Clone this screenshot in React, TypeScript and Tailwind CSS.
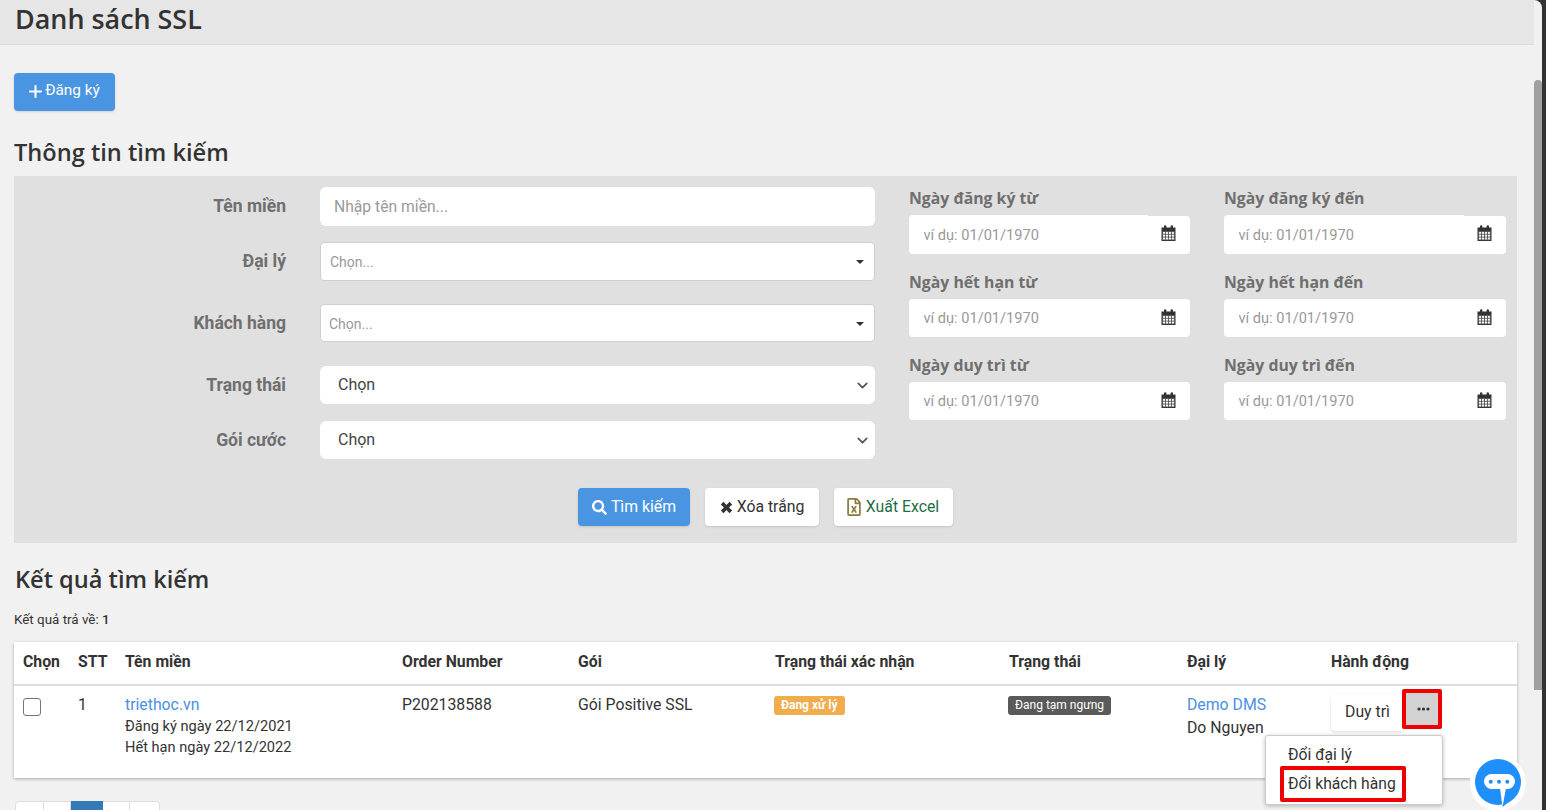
import { ChevronDown, Plus } from "lucide-react";
import { FaRegFileExcel, FaSearch } from "react-icons/fa";

const roboto = "font-['Roboto',sans-serif]";
const openSans = "font-['Open_Sans',sans-serif]";

const CalendarIcon = () => (
  <svg width="15" height="16" viewBox="0 0 15 16" className="text-[#333]">
    <path d="M0.5 2.5H3V1.5a1.2 1.2 0 0 1 2.4 0v1h4.2v-1a1.2 1.2 0 0 1 2.4 0v1h2.5V16H.5z" fill="currentColor" />
    <path
      d="M1.6 6.6h11.8v8.3H1.6zM4.5 6.6v8.3M7.5 6.6v8.3M10.5 6.6v8.3M1.6 9.3h11.8M1.6 12.1h11.8"
      fill="#fff"
      stroke="#444"
      strokeWidth=".8"
    />
  </svg>
);

const Caret = () => (
  <svg width="8" height="4" viewBox="0 0 8 4" className="text-[#333]">
    <path d="M0 0h8L4 4z" fill="currentColor" />
  </svg>
);

const TimesIcon = () => (
  <svg width="13" height="13" viewBox="0 0 12 12" className="text-[#333]">
    <path d="M.8 3.2 3.2.8 6 3.6 8.8.8l2.4 2.4L8.4 6l2.8 2.8-2.4 2.4L6 8.4l-2.8 2.8L.8 8.8 3.6 6z" fill="currentColor" />
  </svg>
);

const ChatBubble = () => (
  <svg width="56" height="56" viewBox="0 0 56 56">
    <circle cx="28" cy="28" r="28" fill="#fff" />
    <circle cx="28" cy="27" r="23" fill="#1f8ffb" />
    <path d="M32.5 52 45 42 30 40z" fill="#1f8ffb" />
    <rect x="14" y="19" width="31" height="15" rx="7.5" fill="#fff" />
    <path d="M30 33h6l-3.5 19z" fill="#fff" />
    <circle cx="20.7" cy="26.7" r="2" fill="#1f8ffb" />
    <circle cx="29" cy="26.7" r="2" fill="#1f8ffb" />
    <circle cx="37.3" cy="26.7" r="2" fill="#1f8ffb" />
  </svg>
);

const FormRow = ({ label, mt, children }: { label: string; mt: string; children: React.ReactNode }) => (
  <div className={`flex items-center ${mt}`}>
    <label className={`w-[272px] text-right text-[17.5px] font-bold text-[#6f6f6f] ${roboto}`}>{label}</label>
    <div className="ml-[34px] w-[555px]">{children}</div>
  </div>
);

const ComboBox = ({ h, pl }: { h: string; pl: string }) => (
  <div className={`flex ${h} items-center justify-between rounded border border-[#cfcfcf] bg-white pt-px ${pl} pr-[10px]`}>
    <span className="text-sm text-[#999]">Chọn...</span>
    <Caret />
  </div>
);

const SelectBox = () => (
  <div className="flex h-[38px] items-center justify-between rounded-md bg-white pl-[18px] pr-[4px]">
    <span className="text-base text-[#444]">Chọn</span>
    <ChevronDown size={17} strokeWidth={2.4} className="text-[#555]" />
  </div>
);

const DateField = ({ label, first }: { label: string; first?: boolean }) => (
  <div>
    <div className={`flex h-[28px] items-start text-[15.8px] font-bold leading-[22px] text-[#6f6f6f] ${openSans}`}>{label}</div>
    <div className="flex items-start">
      <input
        placeholder="ví dụ: 01/01/1970"
        className={`${first ? "h-[39px]" : "h-[38px]"} min-w-0 flex-1 rounded-l bg-white pl-[14.5px] text-[14.6px] outline-none placeholder:text-[#999]`}
      />
      <div className={`flex h-[38px] w-[42px] items-center justify-center rounded-r bg-white pr-px ${first ? "mt-px pb-[5px]" : "pb-[3px]"}`}>
        <CalendarIcon />
      </div>
    </div>
  </div>
);

const ActionButton = ({ className, children }: { className: string; children: React.ReactNode }) => (
  <button className={`flex h-[38px] items-center justify-center rounded shadow-sm ${className}`}>{children}</button>
);

const columns = [
  ["Chọn", "w-[55px]"],
  ["STT", "w-[47px]"],
  ["Tên miền", "w-[277px]"],
  ["Order Number", "w-[176px]"],
  ["Gói", "w-[197px]"],
  ["Trạng thái xác nhận", "w-[234px]"],
  ["Trạng thái", "w-[178px]"],
  ["Đại lý", "w-[144px]"],
  ["Hành động", "w-[195px]"],
];

export default function App() {
  return (
    <div className={`flex h-[810px] overflow-hidden bg-[#333] ${roboto}`}>
      <main className="w-[1534px] shrink-0 bg-[#f1f1f1] text-[#333]">
        <header className={`flex h-[45px] items-start border-b border-[#dcdcdc] bg-[#e6e6e6] pl-[15px] text-[26.9px] font-semibold leading-[37px] ${openSans}`}>
          Danh sách SSL
        </header>

        <div className="pl-[14px] pr-[17px] pt-[28px]">
          <ActionButton className="w-[101px] gap-[2px] bg-[#4a95e2] pb-[2px] pr-px text-[15.4px] text-white">
            <Plus size={19} strokeWidth={2.6} className="-ml-[2px] -mr-[2px]" />
            Đăng ký
          </ActionButton>

          <h2 className={`mt-[23px] h-[42px] text-[23.6px] font-semibold leading-[36px] ${openSans}`}>Thông tin tìm kiếm</h2>

          <section className="h-[367px] bg-[#e0e0e0] pt-[11px]">
            <div className="flex">
              <div className="w-[895px]">
                <FormRow label="Tên miền" mt="">
                  <input
                    placeholder="Nhập tên miền..."
                    className="h-[39px] w-full rounded-md bg-white pl-[14px] text-[15.7px] outline-none placeholder:text-[#999]"
                  />
                </FormRow>
                <FormRow label="Đại lý" mt="mt-[16px]">
                  <ComboBox h="h-[39px]" pl="pl-[9px]" />
                </FormRow>
                <FormRow label="Khách hàng" mt="mt-[23px]">
                  <ComboBox h="h-[38px]" pl="pl-[8px]" />
                </FormRow>
                <FormRow label="Trạng thái" mt="mt-[24px]">
                  <SelectBox />
                </FormRow>
                <FormRow label="Gói cước" mt="mt-[17px]">
                  <SelectBox />
                </FormRow>
              </div>
              <div className="grid w-[597px] grid-cols-[281px_282px] content-start gap-x-[34px] gap-y-[17px]">
                <DateField label="Ngày đăng ký từ" first />
                <DateField label="Ngày đăng ký đến" first />
                <DateField label="Ngày hết hạn từ" />
                <DateField label="Ngày hết hạn đến" />
                <DateField label="Ngày duy trì từ" />
                <DateField label="Ngày duy trì đến" />
              </div>
            </div>

            <div className="mt-[29px] flex justify-center gap-[15px]">
              <ActionButton className="w-[112px] gap-[4px] bg-[#4a95e2] text-[15.8px] text-white">
                <FaSearch size={15} />
                Tìm kiếm
              </ActionButton>
              <ActionButton className="w-[114px] gap-[4px] bg-white text-[15.8px] text-[#333]">
                <TimesIcon />
                Xóa trắng
              </ActionButton>
              <ActionButton className="w-[119px] gap-[3px] bg-white pr-[3px] text-[15.8px] text-[#1d6f42]">
                <FaRegFileExcel size={18} className="text-[#8a7a3a]" />
                Xuất Excel
              </ActionButton>
            </div>
          </section>

          <h2 className={`mt-[20px] h-[42px] pl-px text-[23.6px] font-semibold leading-[32px] ${openSans}`}>Kết quả tìm kiếm</h2>
          <p className="mt-[6px] h-[31px] text-[13.4px] leading-[18px]">
            Kết quả trả về: <b className="font-medium">1</b>
          </p>

          <div className="relative bg-white shadow-[0_1px_3px_rgba(0,0,0,0.3)]">
            <table className="w-[1503px] table-fixed text-left text-[15.8px]">
              <thead>
                <tr className="h-[43px] border-b-2 border-[#ddd]">
                  {columns.map(([name, width]) => (
                    <th key={name} className={`${width} pb-[2px] pl-[9px] font-bold`}>
                      {name}
                    </th>
                  ))}
                </tr>
              </thead>
              <tbody>
                <tr className="h-[93px] align-top">
                  <td className="pl-[9px] pt-[12px]">
                    <span className="block h-[18px] w-[18px] rounded-[3px] border border-[#767676] bg-white" />
                  </td>
                  <td className="pl-[9px] pt-[7px]">1</td>
                  <td className="pl-[9px] pt-[8px] text-[14.6px] leading-[21px]">
                    <a className="text-[15.8px] text-[#4a90e2]">triethoc.vn</a>
                    <div>Đăng ký ngày 22/12/2021</div>
                    <div>Hết hạn ngày 22/12/2022</div>
                  </td>
                  <td className="pl-[9px] pt-[7px]">P202138588</td>
                  <td className="pl-[9px] pt-[7px]">Gói Positive SSL</td>
                  <td className="pl-[8px] pt-[6px]">
                    <span className="inline-block rounded-[3px] bg-[#f0ad4e] px-[7px] text-xs font-bold leading-[19px] text-white">Đang xử lý</span>
                  </td>
                  <td className="pl-[8px] pt-[6px]">
                    <span className="inline-block rounded-[3px] bg-[#5a5a5a] px-[7px] text-xs leading-[19px] text-white">Đang tạm ngưng</span>
                  </td>
                  <td className="pl-[9px] pt-[7px] leading-[23px]">
                    <a className="text-[#4a90e2]">Demo DMS</a>
                    <div>Do Nguyen</div>
                  </td>
                  <td className="pl-[9px] pt-[3px]">
                    <div className="flex items-start">
                      <button className="mt-[5px] h-[37px] w-[71px] rounded-l bg-white pb-[2px] pl-[2px] shadow-[0_1px_3px_rgba(0,0,0,0.15)]">Duy trì</button>
                      <button className="flex h-[40px] w-[40px] items-center justify-center rounded-[2px] border-[4px] border-[#ee0000] bg-[#d2d2d2] pl-[2px] text-[#333]">
                        <svg width="13" height="4" viewBox="0 0 13 4">
                          <circle cx="2" cy="2" r="1.6" fill="currentColor" />
                          <circle cx="6.5" cy="2" r="1.6" fill="currentColor" />
                          <circle cx="11" cy="2" r="1.6" fill="currentColor" />
                        </svg>
                      </button>
                    </div>
                  </td>
                </tr>
              </tbody>
            </table>

            {/* dropdown menu over the row */}
            <div className="absolute left-[1251px] top-[93px] h-[70px] w-[178px] rounded-[3px] border border-[#ccc] bg-white text-[15.7px] shadow-[0_1px_4px_rgba(0,0,0,0.25)]">
              <div className="pl-[22px] pt-[9px] leading-[20px]">Đổi đại lý</div>
              <div className="ml-[14px] mt-px flex h-[36px] w-[126px] items-center rounded-[2px] border-[4px] border-[#ee0000] pl-[4px]">Đổi khách hàng</div>
            </div>
          </div>

          <div className="ml-px mt-[23px] flex h-[34px]">
            <span className="h-full w-[29px] rounded-l border border-[#ddd] bg-white" />
            <span className="h-full w-[27px] border-y border-r border-[#ddd] bg-white" />
            <span className="h-full w-[32px] bg-[#337ab7]" />
            <span className="h-full w-[27px] border-y border-r border-[#ddd] bg-white" />
            <span className="h-full w-[30px] rounded-r border-y border-r border-[#ddd] bg-white" />
          </div>
        </div>
      </main>

      {/* scrollbar */}
      <div className="w-[8px] shrink-0 rounded-tr-[8px] bg-[#f1f1f1] pt-[80px]">
        <div className="h-[610px] rounded-t bg-[#a0a0a0]" />
      </div>

      <div className="absolute left-[1470px] top-[755px]">
        <ChatBubble />
      </div>
    </div>
  );
}
